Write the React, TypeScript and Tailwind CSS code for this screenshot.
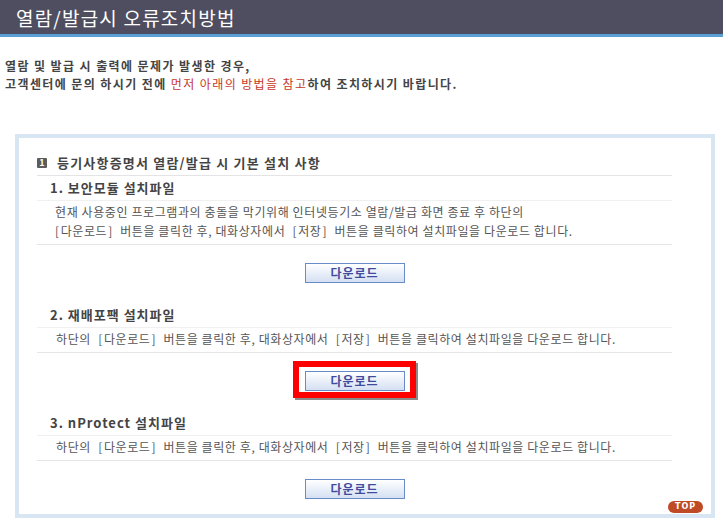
import React from "react";

const font = { fontFamily: '"Noto Sans CJK KR", "Noto Sans", sans-serif' };

function Btn() {
  return (
    <button className="relative block w-[100px] h-[20px] border border-[#6a8bc9] bg-gradient-to-b from-[#ffffff] to-[#d5e0f3] text-[12px] leading-[18px] font-bold text-[#3f4c9e] tracking-[1px]">
      다운로드
    </button>
  );
}

function DownloadButton({ highlight = false }: { highlight?: boolean }) {
  return (
    <div className="flex justify-center mt-[18px] mb-[20px]">
      <div className="relative flex">
        {highlight && (
          <div className="absolute -left-[12px] -top-[10px] w-[123px] h-[37px] border-[6px] border-[#ff0000] shadow-[2px_2px_0_#8a8a8a] pointer-events-none" />
        )}
        <Btn />
      </div>
    </div>
  );
}

function ItemTitle({ children }: { children: React.ReactNode }) {
  return (
    <div className="h-[25px] pl-[13px] border-b border-[#f0f0f0] flex items-center text-[13px] leading-[18px] font-bold text-[#444] tracking-[1px]">
      {children}
    </div>
  );
}

const L = () => <span className="pl-[4px] pr-[1px]">[</span>;
const R = () => <span className="pl-[1px] pr-[4px]">]</span>;

function Desc({ children, className = "" }: { children: React.ReactNode; className?: string }) {
  return (
    <div
      className={
        "pt-[1px] pb-[4px] border-b border-[#e6e6e6] text-[12px] leading-[19px] text-[#555] tracking-[0.6px] " +
        className
      }
    >
      {children}
    </div>
  );
}

const SaveLine = () => (
  <>
    하단의 <L />다운로드<R /> 버튼을 클릭한 후, 대화상자에서 <L />저장<R /> 버튼을 클릭하여 설치파일을 다운로드 합니다.
  </>
);

export default function App() {
  return (
    <div className="w-[723px] h-[525px] bg-white overflow-hidden" style={font}>
      <div className="h-[34px] bg-[#4f4e60] flex items-center pl-[16px]">
        <span className="text-white text-[19px] leading-none tracking-[1.2px]">열람/발급시 오류조치방법</span>
      </div>
      <div className="h-[3px] bg-[#5a9fd6]" />

      <div className="pt-[20px] pl-[5px] text-[12px] leading-[18px] font-bold text-[#444] tracking-[1.4px]">
        <div>열람 및 발급 시 출력에 문제가 발생한 경우,</div>
        <div>
          고객센터에 문의 하시기 전에{" "}
          <span className="font-normal text-[#c7371f]">먼저 아래의 방법을 참고</span>하여 조치하시기 바랍니다.
        </div>
      </div>

      <div className="mt-[41px] ml-[15px] w-[700px] border-4 border-[#d8e5f2] pt-[13px] pl-[18px] pr-[8px] pb-[1px]">
        <div className="w-[635px]">
          <div className="h-[25px] border-b border-[#e4e4e4] flex items-center">
            <span className="w-[10px] h-[10px] bg-[#5c5c5c] rounded-[1px] text-white text-[9px] leading-[10px] font-bold flex items-center justify-center">
              1
            </span>
            <span className="ml-[10px] text-[13px] leading-[18px] font-bold text-[#444] tracking-[1.2px]">
              등기사항증명서 열람/발급 시 기본 설치 사항
            </span>
          </div>

          <ItemTitle>1. 보안모듈 설치파일</ItemTitle>
          <Desc className="pl-[18px]">
            <div>현재 사용중인 프로그램과의 충돌을 막기위해 인터넷등기소 열람/발급 화면 종료 후 하단의</div>
            <div className="-ml-[4px]">
              <L />다운로드<R /> 버튼을 클릭한 후, 대화상자에서 <L />저장<R /> 버튼을 클릭하여 설치파일을 다운로드
              합니다.
            </div>
          </Desc>
          <DownloadButton />

          <ItemTitle>2. 재배포팩 설치파일</ItemTitle>
          <Desc className="pl-[19px]">
            <div>
              <SaveLine />
            </div>
          </Desc>
          <DownloadButton highlight />

          <ItemTitle>3. nProtect 설치파일</ItemTitle>
          <Desc className="pl-[19px]">
            <div>
              <SaveLine />
            </div>
          </Desc>
          <div className="flex justify-center mt-[18px]">
            <Btn />
          </div>
        </div>
        <div className="flex justify-end mt-[2px]">
          <div
            className="w-[35px] h-[12px] rounded-full bg-[#bf4a26] text-white text-[8px] leading-[12px] font-bold tracking-[1px] flex items-center justify-center"
            style={{ fontFamily: '"DejaVu Sans", sans-serif' }}
          >
            TOP
          </div>
        </div>
      </div>
    </div>
  );
}
